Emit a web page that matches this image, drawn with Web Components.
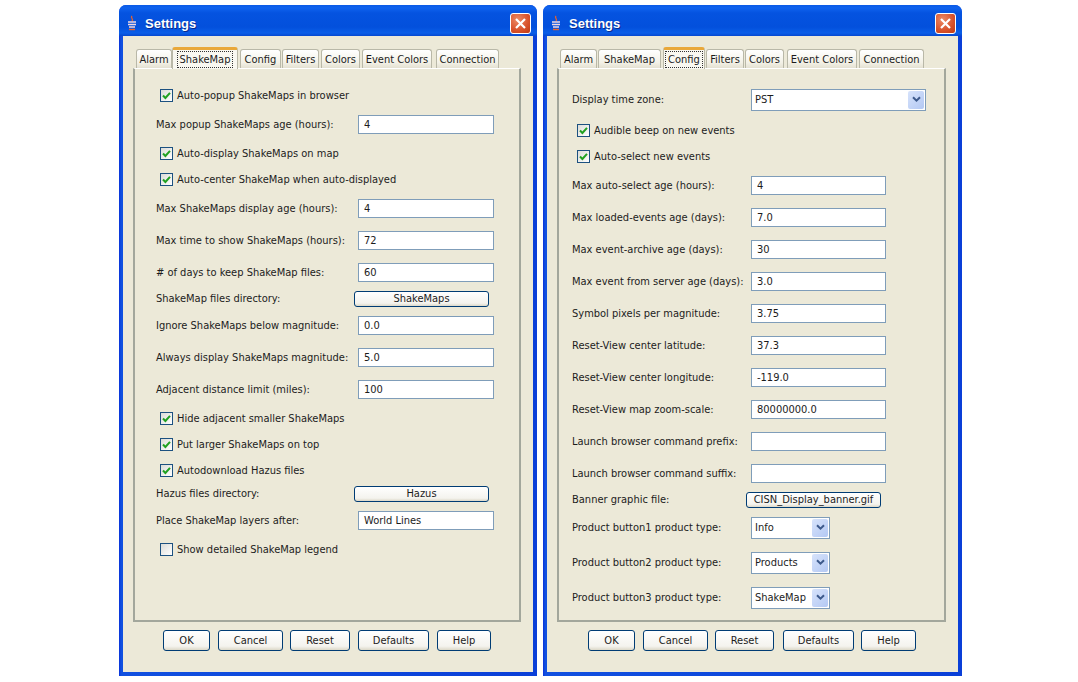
<!DOCTYPE html>
<html>
<head>
<meta charset="utf-8">
<title>Settings</title>
<style>
  html, body { margin: 0; background: #fff; }
  body {
    display: flex;
    gap: 6px;
    padding: 5px 0 0 119px;
    font: 11px "DejaVu Sans Condensed", "Liberation Sans", Arial, sans-serif;
    color: #1c1c1c;
  }
</style>
</head>
<body>

<xp-window w="418" style="--actions-left:30px">
  <xp-tab w="36" g="0">Alarm</xp-tab>
  <xp-tab w="66" g="2" active>ShakeMap</xp-tab>
  <xp-tab w="41" g="1">Config</xp-tab>
  <xp-tab w="37" g="2">Filters</xp-tab>
  <xp-tab w="39" g="2">Colors</xp-tab>
  <xp-tab w="70" g="4">Event Colors</xp-tab>
  <xp-tab w="63" g="0">Connection</xp-tab>

  <set-panel slot="panel" style="--label-left:21px;--check-left:25px;--input-left:223px;--button-left:219px;--field-w:136px">
    <set-check checked>Auto-popup ShakeMaps in browser</set-check>
    <set-field value="4">Max popup ShakeMaps age (hours):</set-field>
    <set-check checked>Auto-display ShakeMaps on map</set-check>
    <set-check checked>Auto-center ShakeMap when auto-displayed</set-check>
    <set-field value="4">Max ShakeMaps display age (hours):</set-field>
    <set-field value="72">Max time to show ShakeMaps (hours):</set-field>
    <set-field value="60"># of days to keep ShakeMap files:</set-field>
    <set-file value="ShakeMaps">ShakeMap files directory:</set-file>
    <set-field value="0.0">Ignore ShakeMaps below magnitude:</set-field>
    <set-field value="5.0">Always display ShakeMaps magnitude:</set-field>
    <set-field value="100">Adjacent distance limit (miles):</set-field>
    <set-check checked>Hide adjacent smaller ShakeMaps</set-check>
    <set-check checked>Put larger ShakeMaps on top</set-check>
    <set-check checked>Autodownload Hazus files</set-check>
    <set-file value="Hazus">Hazus files directory:</set-file>
    <set-field value="World Lines">Place ShakeMap layers after:</set-field>
    <set-check>Show detailed ShakeMap legend</set-check>
  </set-panel>

  <xp-button slot="actions" w="47" g="8">OK</xp-button>
  <xp-button slot="actions" w="65" g="7">Cancel</xp-button>
  <xp-button slot="actions" w="60" g="8">Reset</xp-button>
  <xp-button slot="actions" w="71" g="8">Defaults</xp-button>
  <xp-button slot="actions" w="54" g="0">Help</xp-button>
</xp-window>

<xp-window w="419" style="--actions-left:31px">
  <xp-tab w="37" g="1">Alarm</xp-tab>
  <xp-tab w="63" g="2">ShakeMap</xp-tab>
  <xp-tab w="42" g="1" active>Config</xp-tab>
  <xp-tab w="38" g="1">Filters</xp-tab>
  <xp-tab w="39" g="3">Colors</xp-tab>
  <xp-tab w="70" g="2">Event Colors</xp-tab>
  <xp-tab w="65" g="0">Connection</xp-tab>

  <set-panel slot="panel" style="--label-left:13px;--check-left:18px;--input-left:192px;--button-left:187px;--field-w:135px">
    <set-select value="PST" w="175">Display time zone:</set-select>
    <set-check checked>Audible beep on new events</set-check>
    <set-check checked>Auto-select new events</set-check>
    <set-field value="4">Max auto-select age (hours):</set-field>
    <set-field value="7.0">Max loaded-events age (days):</set-field>
    <set-field value="30">Max event-archive age (days):</set-field>
    <set-field value="3.0">Max event from server age (days):</set-field>
    <set-field value="3.75">Symbol pixels per magnitude:</set-field>
    <set-field value="37.3">Reset-View center latitude:</set-field>
    <set-field value="-119.0">Reset-View center longitude:</set-field>
    <set-field value="80000000.0">Reset-View map zoom-scale:</set-field>
    <set-field value="">Launch browser command prefix:</set-field>
    <set-field value="">Launch browser command suffix:</set-field>
    <set-file value="CISN_Display_banner.gif">Banner graphic file:</set-file>
    <set-select value="Info" w="79">Product button1 product type:</set-select>
    <set-select value="Products" w="79">Product button2 product type:</set-select>
    <set-select value="ShakeMap" w="79">Product button3 product type:</set-select>
  </set-panel>

  <xp-button slot="actions" w="47" g="8">OK</xp-button>
  <xp-button slot="actions" w="65" g="7">Cancel</xp-button>
  <xp-button slot="actions" w="59" g="9">Reset</xp-button>
  <xp-button slot="actions" w="71" g="7">Defaults</xp-button>
  <xp-button slot="actions" w="55" g="0">Help</xp-button>
</xp-window>

<script>
const CHECK_SVG = `<svg width="9" height="9" viewBox="0 0 9 9"><path d="M1 4.5 L3.4 7 L8 1.8" fill="none" stroke="#21a121" stroke-width="2"/></svg>`;

const ARROW_SVG = `<svg width="9" height="7" viewBox="0 0 9 7"><path d="M1 1.2 L4.5 4.7 L8 1.2" fill="none" stroke="#3d5a8c" stroke-width="2"/></svg>`;

class XpWindow extends HTMLElement {
  constructor() {
    super();
    this.attachShadow({ mode: 'open' });
    this.shadowRoot.innerHTML = `
      <style>
        :host {
          display: flex;
          flex-direction: column;
          box-sizing: border-box;
          height: 671px;
          background: linear-gradient(90deg, #0831d9, #1150e0 2px, #0a3fd8);
          border-radius: 7px 7px 0 0;
          padding: 0 4px 4px;
        }
        .title {
          display: flex;
          align-items: center;
          height: 31px;
          box-sizing: border-box;
          padding: 5px 6px 0 8px;
          flex: none;
          margin: 0 -4px;
          border-radius: 7px 7px 0 0;
          background: linear-gradient(180deg, #0a5ae6 0, #0f62ee 3px, #0553e0 8px, #0350dc 22px, #0a5ee8 28px, #0548d0 31px);
          color: #fff;
          font: bold 13px "Liberation Sans", Arial, sans-serif;
          text-shadow: 1px 1px 0 #0a2a8c;
        }
        .title span { margin-left: 8px; flex: 1; }
        .close {
          display: flex;
          width: 21px;
          height: 21px;
          box-sizing: border-box;
          border: 1px solid #fff;
          border-radius: 3px;
          background: radial-gradient(circle at 35% 30%, #ec8a66, #d8512a 60%, #bd3a14);
          align-items: center;
          justify-content: center;
        }
        .body {
          flex: 1;
          display: flex;
          flex-direction: column;
          background: #ece9d8;
          padding: 11px 12px 0 10px;
          min-height: 0;
        }
        .tabs { display: flex; align-items: flex-end; height: 21px; padding-left: 3px; position: relative; z-index: 1; }
        .actions { display: flex; padding: 8px 0 0 var(--actions-left); }
      </style>
      <div class="title">
        <svg width="10" height="16" viewBox="0 0 10 16">
          <path d="M5 1 C3 3 7 4 5 6" fill="none" stroke="#e8632c" stroke-width="1.3"/>
          <path d="M1 7 H9 M1 9.5 H9 M2 12 H8" stroke="#f0d8e0" stroke-width="1.4"/>
          <path d="M2 14.5 H8" stroke="#e8632c" stroke-width="1.4"/>
        </svg>
        <span>Settings</span>
        <div class="close">
          <svg width="13" height="13" viewBox="0 0 13 13"><path d="M2 2 L11 11 M11 2 L2 11" stroke="#fff" stroke-width="2.2"/></svg>
        </div>
      </div>
      <div class="body">
        <div class="tabs"><slot></slot></div>
        <slot name="panel"></slot>
        <div class="actions"><slot name="actions"></slot></div>
      </div>`;
  }
  connectedCallback() {
    this.style.width = this.getAttribute('w') + 'px';
  }
}

class XpTab extends HTMLElement {
  constructor() {
    super();
    this.attachShadow({ mode: 'open' });
    this.shadowRoot.innerHTML = `
      <style>
        :host {
          display: flex;
          align-items: center;
          justify-content: center;
          box-sizing: border-box;
          height: 19px;
          border: 1px solid #b9b8a8;
          border-bottom: none;
          border-radius: 3px 3px 0 0;
          background: linear-gradient(180deg, #fff, #f3f1e6 70%, #e4e1d2);
          white-space: nowrap;
        }
        :host([active]) {
          height: 22px;
          margin-bottom: -1px;
          background: #f9f8f1;
          border-top: 3px solid #e9a83a;
          position: relative;
        }
        :host([active]) span { outline: 1px dotted #333; padding: 0 2px; line-height: 15px; }
      </style>
      <span><slot></slot></span>`;
  }
  connectedCallback() {
    this.style.width = this.getAttribute('w') + 'px';
    this.style.marginRight = this.getAttribute('g') + 'px';
  }
}

class SetPanel extends HTMLElement {
  constructor() {
    super();
    this.attachShadow({ mode: 'open' });
    this.shadowRoot.innerHTML = `
      <style>
        :host {
          display: block;
          box-sizing: border-box;
          height: 554px;
          flex: none;
          padding-top: 13px;
          background: #ece9d8;
          border: 2px solid #a3a79c;
          border-top: 1px solid #fff;
        }
      </style>
      <slot></slot>`;
  }
}

class SetCheck extends HTMLElement {
  constructor() {
    super();
    this.attachShadow({ mode: 'open' });
    this.shadowRoot.innerHTML = `
      <style>
        :host {
          display: flex;
          align-items: center;
          height: 26px;
          padding-left: var(--check-left);
          white-space: nowrap;
        }
        .box {
          display: flex;
          align-items: center;
          justify-content: center;
          box-sizing: border-box;
          width: 13px;
          height: 13px;
          margin-right: 4px;
          border: 1px solid #1c5180;
          background: linear-gradient(135deg, #dcdcd7, #fff);
        }
      </style>
      <div class="box"></div><slot></slot>`;
  }
  connectedCallback() {
    if (this.hasAttribute('checked')) {
      this.shadowRoot.querySelector('.box').innerHTML = CHECK_SVG;
    }
  }
}

class SetField extends HTMLElement {
  constructor() {
    super();
    this.attachShadow({ mode: 'open' });
    this.shadowRoot.innerHTML = `
      <style>
        :host {
          display: flex;
          align-items: center;
          height: 32px;
          padding-left: var(--label-left);
          white-space: nowrap;
        }
        .label { width: calc(var(--input-left) - var(--label-left)); flex: none; }
        .input {
          box-sizing: border-box;
          width: var(--field-w);
          height: 19px;
          padding: 0 5px;
          line-height: 17px;
          border: 1px solid #7f9db9;
          background: #fff;
        }
      </style>
      <div class="label"><slot></slot></div>
      <div class="input"></div>`;
  }
  connectedCallback() {
    this.shadowRoot.querySelector('.input').textContent = this.getAttribute('value');
  }
}

class SetFile extends HTMLElement {
  constructor() {
    super();
    this.attachShadow({ mode: 'open' });
    this.shadowRoot.innerHTML = `
      <style>
        :host {
          display: flex;
          align-items: center;
          height: 21px;
          padding-left: var(--label-left);
          white-space: nowrap;
        }
        .label { width: calc(var(--button-left) - var(--label-left)); flex: none; }
        .btn {
          box-sizing: border-box;
          width: 135px;
          height: 16px;
          line-height: 14px;
          text-align: center;
          border: 1px solid #003c74;
          border-radius: 3px;
          background: linear-gradient(180deg, #fff, #f4f3ee 80%, #dcd8c8);
        }
      </style>
      <div class="label"><slot></slot></div>
      <div class="btn"></div>`;
  }
  connectedCallback() {
    this.shadowRoot.querySelector('.btn').textContent = this.getAttribute('value');
  }
}

class SetSelect extends HTMLElement {
  constructor() {
    super();
    this.attachShadow({ mode: 'open' });
    this.shadowRoot.innerHTML = `
      <style>
        :host {
          display: flex;
          align-items: center;
          height: 35px;
          padding-left: var(--label-left);
          white-space: nowrap;
        }
        .label { width: calc(var(--input-left) - var(--label-left)); flex: none; }
        .select {
          display: flex;
          align-items: center;
          justify-content: space-between;
          box-sizing: border-box;
          height: 22px;
          padding: 0 1px 0 3px;
          border: 1px solid #7f9db9;
          background: #fff;
        }
        .arrow {
          display: flex;
          align-items: center;
          justify-content: center;
          width: 16px;
          height: 18px;
          border-radius: 2px;
          background: linear-gradient(135deg, #d7e3fb, #b3c8f3);
        }
      </style>
      <div class="label"><slot></slot></div>
      <div class="select"><span></span><div class="arrow">${ARROW_SVG}</div></div>`;
  }
  connectedCallback() {
    this.shadowRoot.querySelector('.select').style.width = this.getAttribute('w') + 'px';
    this.shadowRoot.querySelector('span').textContent = this.getAttribute('value');
  }
}

class XpButton extends HTMLElement {
  constructor() {
    super();
    this.attachShadow({ mode: 'open' });
    this.shadowRoot.innerHTML = `
      <style>
        :host {
          display: flex;
          align-items: center;
          justify-content: center;
          box-sizing: border-box;
          height: 21px;
          border: 1px solid #003c74;
          border-radius: 3px;
          background: linear-gradient(180deg, #fff, #f4f3ee 80%, #dcd8c8);
          white-space: nowrap;
        }
      </style>
      <slot></slot>`;
  }
  connectedCallback() {
    this.style.width = this.getAttribute('w') + 'px';
    this.style.marginRight = this.getAttribute('g') + 'px';
  }
}

customElements.define('xp-window', XpWindow);
customElements.define('xp-tab', XpTab);
customElements.define('set-panel', SetPanel);
customElements.define('set-check', SetCheck);
customElements.define('set-field', SetField);
customElements.define('set-file', SetFile);
customElements.define('set-select', SetSelect);
customElements.define('xp-button', XpButton);
</script>
</body>
</html>
